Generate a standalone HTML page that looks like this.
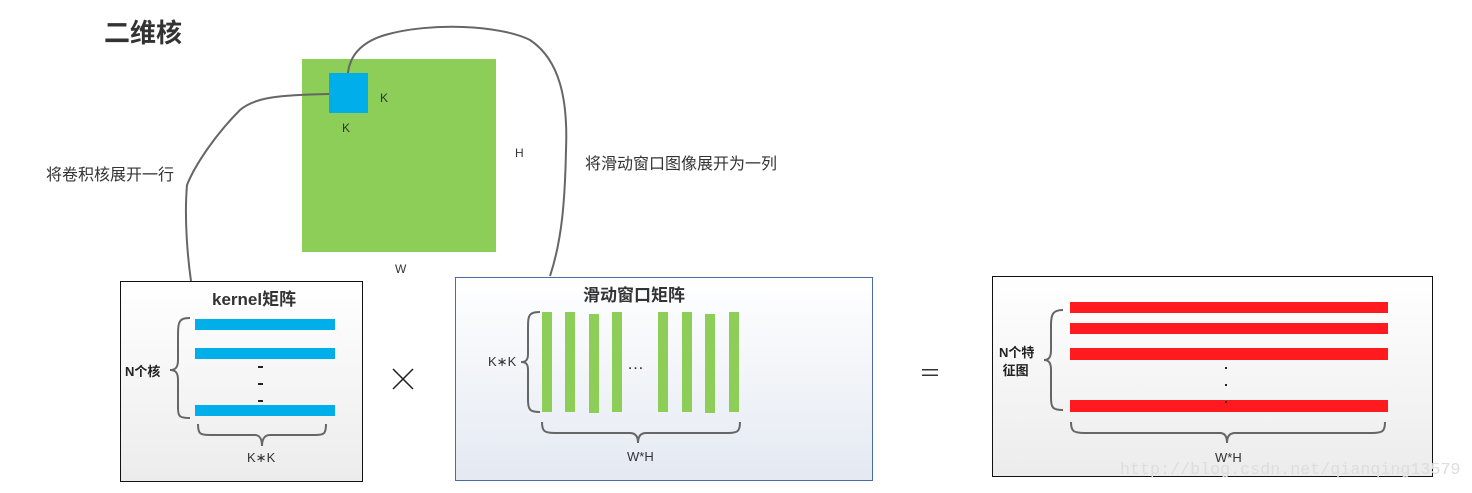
<!DOCTYPE html><html><head><meta charset="utf-8"><style>
body{margin:0;width:1472px;height:493px;background:#fff;position:relative;overflow:hidden;font-family:"Liberation Sans","Noto Sans CJK SC",sans-serif}
.a{position:absolute;white-space:nowrap}
.bx{position:absolute;box-sizing:border-box}
</style></head><body>
<div class="a" style="left:104px;top:13px;font-size:26px;font-weight:bold;color:#333">二维核</div>
<div class="bx" style="left:302px;top:59px;width:194px;height:193px;background:#8cce58"></div>
<div class="bx" style="left:329px;top:73px;width:39px;height:40px;background:#00aeea"></div>
<div class="a" style="left:380px;top:91px;font-size:12px;color:#333">K</div>
<div class="a" style="left:342px;top:121px;font-size:12px;color:#333">K</div>
<div class="a" style="left:515px;top:146px;font-size:12px;color:#333">H</div>
<div class="a" style="left:395px;top:262px;font-size:12px;color:#333">W</div>
<div class="a" style="left:46px;top:161px;font-size:16px;color:#333">将卷积核展开一行</div>
<div class="a" style="left:585px;top:150px;font-size:16px;color:#333">将滑动窗口图像展开为一列</div>

<div class="bx" style="left:120px;top:281px;width:243px;height:201px;border:1.5px solid #111;background:linear-gradient(#fff,#ececec)"></div>
<div class="a" style="left:212px;top:285px;font-size:17px;font-weight:bold;color:#333">kernel矩阵</div>
<div class="bx" style="left:195px;top:319px;width:140px;height:11px;background:#00aeea"></div>
<div class="bx" style="left:195px;top:348px;width:140px;height:11px;background:#00aeea"></div>
<div class="bx" style="left:195px;top:405px;width:140px;height:11px;background:#00aeea"></div>
<div class="bx" style="left:258px;top:366px;width:5px;height:2px;background:#222"></div>
<div class="bx" style="left:258px;top:383px;width:5px;height:2px;background:#222"></div>
<div class="bx" style="left:258px;top:400px;width:5px;height:2px;background:#222"></div>
<div class="a" style="left:125px;top:361px;font-size:13px;font-weight:bold;color:#222">N个核</div>
<div class="a" style="left:247px;top:450px;font-size:13px;color:#333">K∗K</div>

<div class="bx" style="left:455px;top:277px;width:418px;height:204px;border:1px solid #4a6aa6;background:linear-gradient(#fff,#e4e9f2)"></div>
<div class="a" style="left:583px;top:281px;font-size:17px;font-weight:bold;color:#333">滑动窗口矩阵</div>
<div class="bx" style="left:542px;top:312px;width:10px;height:100px;background:#8cce58"></div>
<div class="bx" style="left:565px;top:312px;width:10px;height:100px;background:#8cce58"></div>
<div class="bx" style="left:589px;top:314px;width:10px;height:99px;background:#8cce58"></div>
<div class="bx" style="left:612px;top:312px;width:10px;height:100px;background:#8cce58"></div>
<div class="bx" style="left:658px;top:312px;width:10px;height:100px;background:#8cce58"></div>
<div class="bx" style="left:682px;top:312px;width:10px;height:100px;background:#8cce58"></div>
<div class="bx" style="left:705px;top:314px;width:10px;height:99px;background:#8cce58"></div>
<div class="bx" style="left:729px;top:312px;width:10px;height:100px;background:#8cce58"></div>
<div class="a" style="left:627px;top:354px;font-size:17px;color:#333">…</div>
<div class="a" style="left:488px;top:354px;font-size:13px;color:#333">K∗K</div>
<div class="a" style="left:627px;top:449px;font-size:13px;color:#333">W*H</div>

<div class="a" style="left:919px;top:356px;font-size:22px;color:#333">＝</div>

<div class="bx" style="left:992px;top:276px;width:441px;height:201px;border:1.5px solid #111;background:linear-gradient(#fff,#ececec)"></div>
<div class="bx" style="left:1070px;top:302px;width:318px;height:11px;background:#ff1a1f"></div>
<div class="bx" style="left:1070px;top:323px;width:318px;height:11px;background:#ff1a1f"></div>
<div class="bx" style="left:1070px;top:348px;width:318px;height:12px;background:#ff1a1f"></div>
<div class="bx" style="left:1070px;top:400px;width:318px;height:12px;background:#ff1a1f"></div>
<div class="bx" style="left:1225px;top:367px;width:2px;height:2px;background:#222"></div>
<div class="bx" style="left:1225px;top:384px;width:2px;height:2px;background:#222"></div>
<div class="bx" style="left:1225px;top:401px;width:2px;height:2px;background:#222"></div>
<div class="a" style="left:999px;top:344px;font-size:13px;font-weight:bold;color:#222;line-height:18px">N个特<br>&nbsp;征图</div>
<div class="a" style="left:1215px;top:450px;font-size:13px;color:#333">W*H</div>
<div class="a" style="left:1120px;top:461px;font-size:16.7px;color:#ddd;font-family:'Liberation Mono',monospace">http://blog.csdn.net/qianqing13579</div>

<svg class="a" style="left:0;top:0" width="1472" height="493" fill="none" stroke="#666" stroke-width="2">
<path d="M329 94 C280 95 255 97 240 110 C215 135 195 165 187 185 C184 220 188 260 191 281"/>
<path d="M348 73 C350 55 362 42 385 35 C430 22 500 25 530 40 C560 60 568 100 566 150 C565 200 562 240 550 276"/>
<path d="M190 318 C178 318 178 322 178 340 L178 360 C178 368 175 370 170 370 C175 370 178 372 178 380 L178 408 C178 417 180 418 190 418"/>
<path d="M198 424 C198 434 200 435 210 435 L255 435 C260 435 262 440 262 446 C262 440 264 435 270 435 L315 435 C324 435 326 434 326 424"/>
<path d="M540 312 C528 312 528 316 528 330 L528 354 C528 360 526 362 521 362 C526 362 528 364 528 370 L528 400 C528 410 530 412 540 412"/>
<path d="M542 422 C542 431 544 433 555 433 L630 433 C636 433 638 437 638 443 C638 437 640 433 646 433 L728 433 C738 433 740 431 740 422"/>
<path d="M1063 310 C1053 310 1051 314 1051 325 L1051 350 C1051 357 1049 360 1044 360 C1049 360 1051 363 1051 370 L1051 398 C1051 408 1053 410 1063 410"/>
<path d="M1071 422 C1071 431 1073 433 1085 433 L1220 433 C1225 433 1227 437 1227 443 C1227 437 1229 433 1235 433 L1372 433 C1383 433 1385 431 1385 422"/>
<path d="M393 369 L413 389 M413 369 L393 389" stroke="#222" stroke-width="1.5"/>
</svg>
</body></html>
